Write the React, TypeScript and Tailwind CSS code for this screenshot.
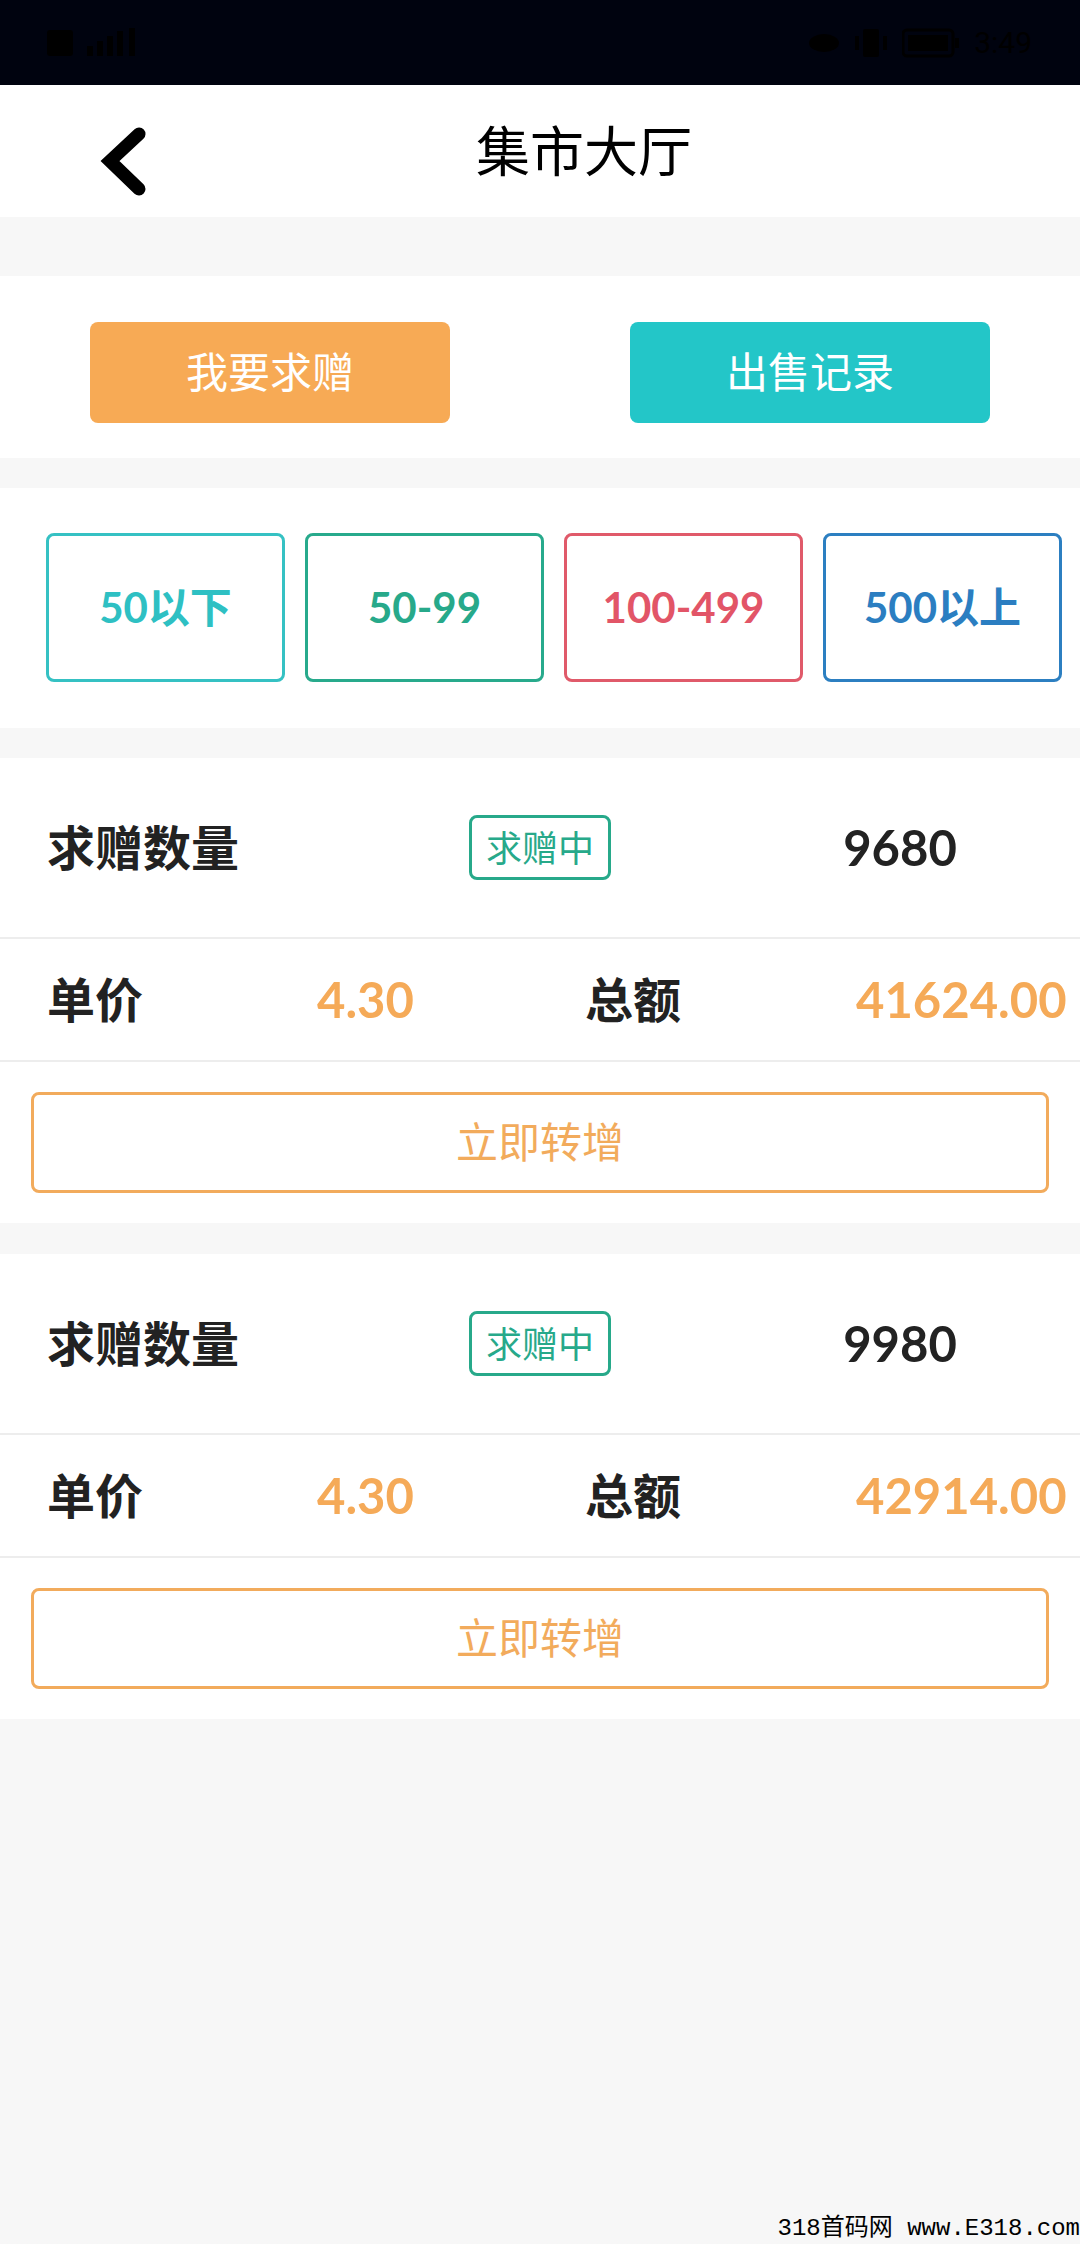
import React from "react";

const font = "font-['Lato','Noto_Sans_CJK_SC',sans-serif]";

function StatusBar() {
  return (
    <div className="flex h-[85px] items-center justify-between bg-[#00030f] pl-[45px] pr-[48px]">
      <div className="flex items-center gap-[12px]">
        <svg width="30" height="30" viewBox="0 0 30 30">
          <rect x="2" y="2" width="26" height="26" rx="3" fill="#000" />
        </svg>
        <svg width="52" height="30" viewBox="0 0 52 30">
          <rect x="0" y="18" width="6" height="10" fill="#000" />
          <rect x="10" y="13" width="6" height="15" fill="#000" />
          <rect x="20" y="8" width="6" height="20" fill="#000" />
          <rect x="30" y="3" width="6" height="25" fill="#000" />
          <rect x="42" y="0" width="6" height="28" fill="#000" />
        </svg>
      </div>
      <div className="flex items-center gap-[14px]">
        <svg width="32" height="22" viewBox="0 0 32 22">
          <ellipse cx="16" cy="11" rx="15" ry="9" fill="#000" />
        </svg>
        <svg width="34" height="30" viewBox="0 0 34 30">
          <rect x="9" y="1" width="16" height="28" rx="2" fill="#000" />
          <rect x="1" y="8" width="4" height="14" fill="#000" />
          <rect x="29" y="8" width="4" height="14" fill="#000" />
        </svg>
        <svg width="58" height="30" viewBox="0 0 58 30">
          <rect x="1" y="2" width="50" height="26" rx="4" fill="none" stroke="#000" strokeWidth="3" />
          <rect x="6" y="7" width="40" height="16" fill="#000" />
          <rect x="53" y="10" width="4" height="10" fill="#000" />
        </svg>
        <span className="font-['Roboto',sans-serif] text-[30px] text-black">3:49</span>
      </div>
    </div>
  );
}

function Header() {
  return (
    <div className="flex h-[132px] items-center bg-white pl-[100px] pr-[60px]">
      <svg width="48" height="90" viewBox="0 0 48 90" className="shrink-0">
        <polyline
          points="39,28 10,55 39,83"
          fill="none"
          stroke="#000"
          strokeWidth="13"
          strokeLinecap="round"
          strokeLinejoin="miter"
        />
      </svg>
      <div className={`flex-1 text-center text-[54px] text-black ${font}`}>集市大厅</div>
    </div>
  );
}

const ranges = [
  { label: "50以下", cls: "border-[#35c1c3] text-[#2ec0c3]" },
  { label: "50-99", cls: "border-[#28aa8c] text-[#27a98a]" },
  { label: "100-499", cls: "border-[#e05a6a] text-[#e25567]" },
  { label: "500以上", cls: "border-[#2c7fc1] text-[#2b7ec1]" },
];

function Card({ qty, total }: { qty: string; total: string }) {
  return (
    <div className={`bg-white ${font}`}>
      <div className="grid h-[181px] grid-cols-3 items-center border-b-2 border-[#ededed]">
        <div className="pl-[47px] text-[48px] font-bold text-[#222]">求赠数量</div>
        <div className="flex justify-center">
          <div className="flex h-[65px] w-[142px] items-center justify-center rounded-[8px] border-[3px] border-[#27a98a] text-[36px] text-[#27a98a]">
            求赠中
          </div>
        </div>
        <div className="text-center text-[49px] font-bold text-[#222]">{qty}</div>
      </div>
      <div className="grid h-[123px] grid-cols-4 items-center border-b-2 border-[#ededed]">
        <div className="pl-[47px] text-[48px] font-bold text-[#222]">单价</div>
        <div className="pl-[47px] text-[49px] font-bold text-[#f5aa58]">4.30</div>
        <div className="pl-[45px] text-[48px] font-bold text-[#222]">总额</div>
        <div className="whitespace-nowrap pl-[46px] text-[49px] font-bold text-[#f5aa58]">{total}</div>
      </div>
      <div className="px-[31px] pb-[30px] pt-[30px]">
        <div className="flex h-[101px] items-center justify-center rounded-[8px] border-[3px] border-[#f2ab5c] text-[42px] text-[#f2ab5c]">
          立即转增
        </div>
      </div>
    </div>
  );
}

export default function App() {
  return (
    <div className={`relative min-h-[2244px] overflow-hidden bg-[#f7f7f7] ${font}`}>
      <StatusBar />
      <Header />

      <div className="mt-[59px] grid grid-cols-2 bg-white pb-[35px] pt-[46px]">
        <div className="flex justify-center">
          <div className="flex h-[101px] w-[360px] items-center justify-center rounded-[8px] bg-[#f7aa55] text-[42px] text-white">
            我要求赠
          </div>
        </div>
        <div className="flex justify-center">
          <div className="flex h-[101px] w-[360px] items-center justify-center rounded-[8px] bg-[#23c6c8] text-[42px] text-white">
            出售记录
          </div>
        </div>
      </div>

      <div className="mt-[30px] flex gap-[20px] bg-white pb-[46px] pl-[46px] pt-[45px]">
        {ranges.map((r) => (
          <div
            key={r.label}
            className={`flex h-[149px] w-[239px] shrink-0 items-center justify-center rounded-[8px] border-[3px] text-[42px] font-bold ${r.cls}`}
          >
            {r.label}
          </div>
        ))}
      </div>

      <div className="mt-[30px] flex flex-col gap-[31px]">
        <Card qty="9680" total="41624.00" />
        <Card qty="9980" total="42914.00" />
      </div>

      <div className="absolute bottom-0 right-0 font-['Liberation_Mono','Noto_Sans_CJK_SC',monospace] text-[24px] leading-[30px] text-black">
        318首码网 www.E318.com
      </div>
    </div>
  );
}
